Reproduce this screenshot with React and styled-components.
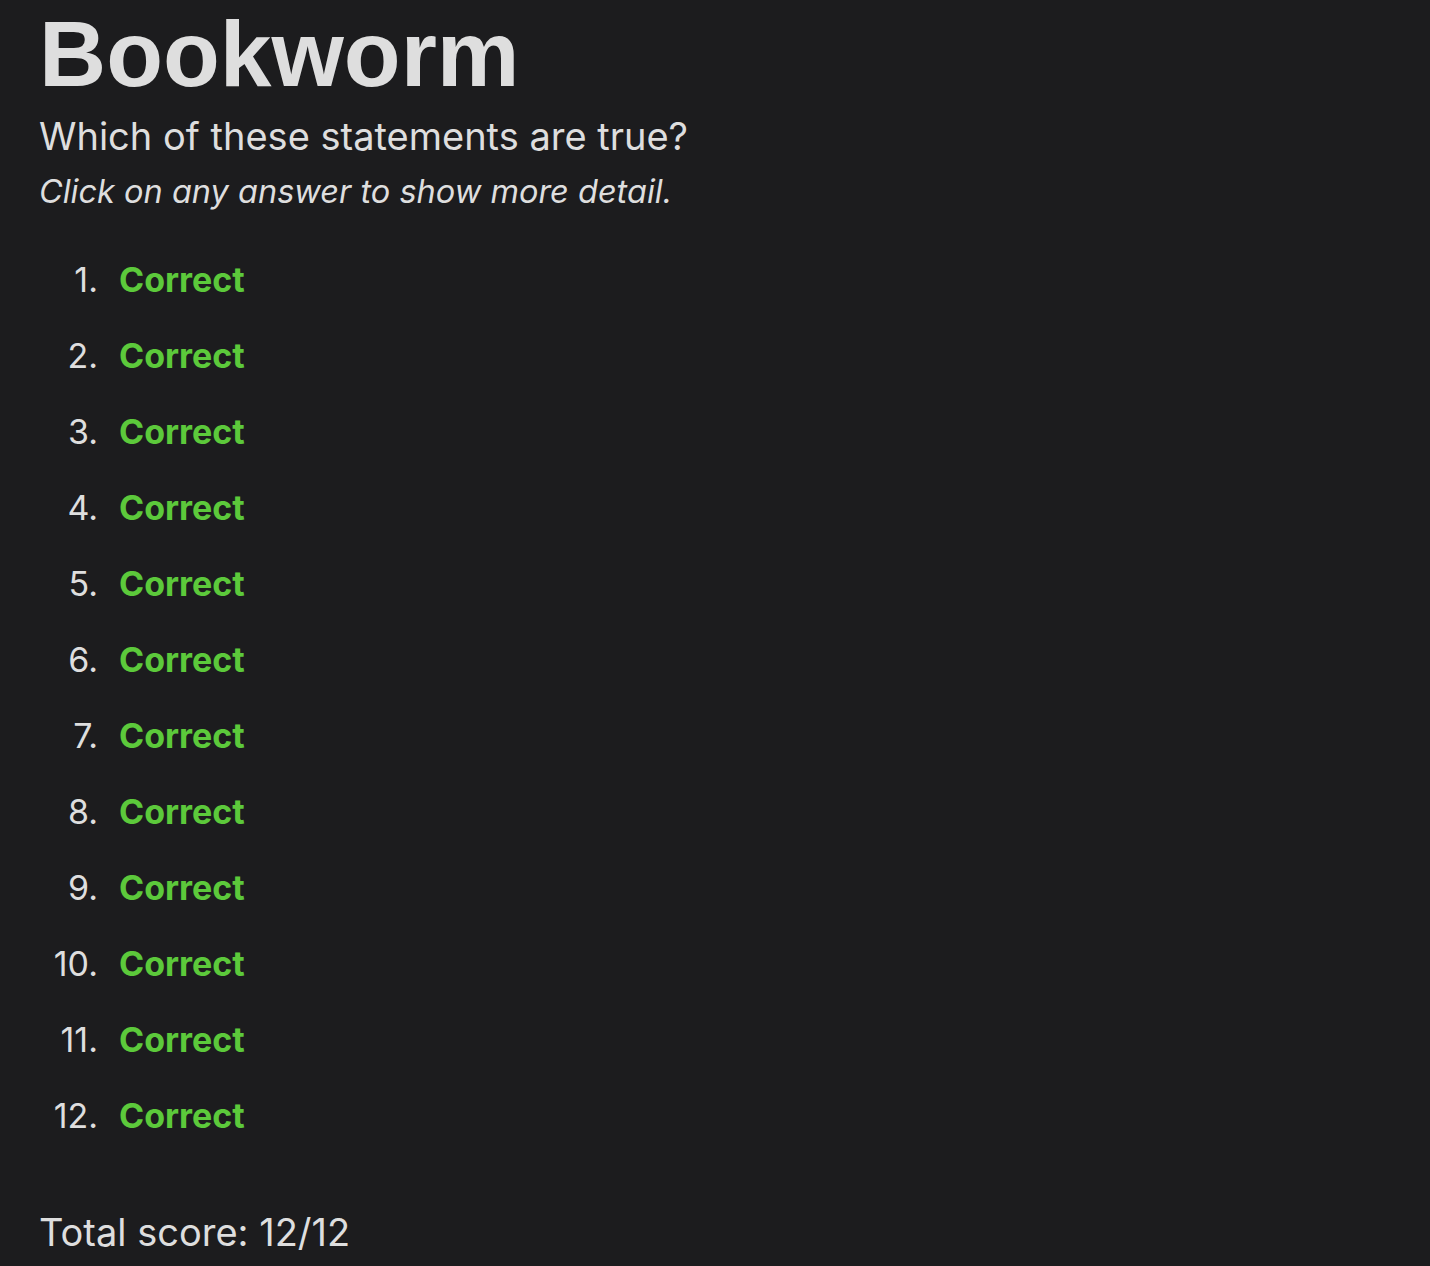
import React from 'react';
import styled, { createGlobalStyle } from 'styled-components';

const GlobalStyle = createGlobalStyle`
    html, body {
        margin: 0;
        padding: 0;
        background-color: #1c1c1e;
    }
    body {
        font-family: Inter, "Noto Sans", sans-serif;
        color: #dedede;
    }
`;

const Page = styled.div`
    padding: 0 40px 20px 40px;
`;

const Title = styled.h1`
    font-family: "Liberation Sans", Arial, sans-serif;
    font-weight: 700;
    font-size: 93px;
    line-height: 1;
    margin: 0 0 0 -1px;
    padding-top: 8px;
    color: #dedede;
`;

const Question = styled.p`
    font-size: 38px;
    line-height: 46px;
    margin: 12px 0 0 -1px;
`;

const Hint = styled.p`
    font-size: 32.5px;
    font-style: italic;
    line-height: 46px;
    margin: 10px 0 0 -1px;
`;

const AnswerList = styled.ol`
    list-style: none;
    margin: 42px 0 0 0;
    padding: 0;
    display: flex;
    flex-direction: column;
    gap: 30px;
`;

const Answer = styled.li`
    display: grid;
    grid-template-columns: 58px auto;
    column-gap: 21px;
    align-items: baseline;
    font-size: 34px;
    line-height: 46px;
`;

const Number = styled.span`
    text-align: right;
    color: #dedede;
`;

const Result = styled.span`
    font-weight: 700;
    color: ${(p) => (p.$correct ? '#5cc93b' : '#e0443a')};
    cursor: pointer;
`;

const Score = styled.p`
    font-size: 38px;
    line-height: 46px;
    margin: 70px 0 0 -1px;
`;

const answers = Array.from({ length: 12 }, () => true);

export default function App() {
    return (
        <Page>
            <GlobalStyle />
            <Title>Bookworm</Title>
            <Question>Which of these statements are true?</Question>
            <Hint>Click on any answer to show more detail.</Hint>
            <AnswerList>
                {answers.map((ok, i) => (
                    <Answer key={i}>
                        <Number>{i + 1}.</Number>
                        <Result $correct={ok}>{ok ? 'Correct' : 'Incorrect'}</Result>
                    </Answer>
                ))}
            </AnswerList>
            <Score>Total score: 12/12</Score>
        </Page>
    );
}
